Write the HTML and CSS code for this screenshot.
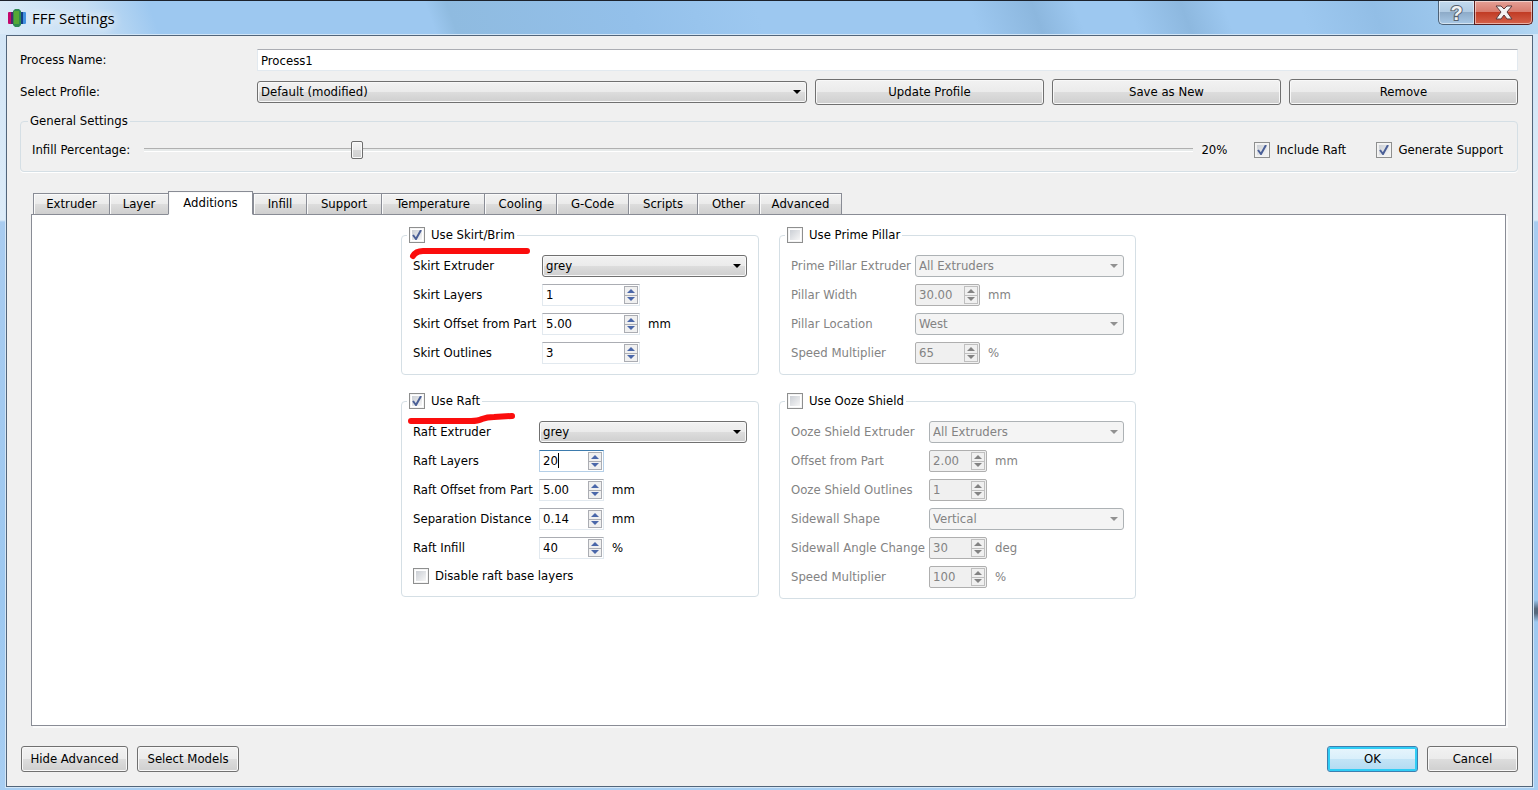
FILE: index.html
```html
<!DOCTYPE html>
<html lang="en">
<head>
  <meta charset="UTF-8">
  <title>FFF Settings</title>
  <link rel="stylesheet" href="styles.css">
</head>
<body>

  <header class="titlebar">
    <svg class="app-icon" width="18" height="20" viewBox="0 0 18 20">
      <rect x="0" y="4" width="5" height="12" rx="1" fill="#c4086c"/>
      <rect x="3" y="4" width="3" height="12" fill="#4b2a6b"/>
      <rect x="13" y="4" width="5" height="12" rx="1" fill="#3f8fe0"/>
      <rect x="12" y="4" width="3" height="12" fill="#123f86"/>
      <path d="M7 1h4l2 2v14l-2 2H7l-2-2V3z" fill="#2f8a52"/>
      <rect x="6" y="3" width="5" height="13" fill="#55a836"/>
    </svg>
    <h1>FFF Settings</h1>
    <div class="window-buttons">
      <button type="button" class="help" aria-label="Help">?</button>
      <button type="button" class="close" aria-label="Close">
        <svg width="18" height="15" viewBox="0 0 18 15">
          <path d="M1 1h5l3 3 3-3h5l-5 6 5 7h-5l-3-4-3 4H1l5-7z" fill="#f4f4f4" stroke="#5b3a3c" stroke-width="1"/>
        </svg>
      </button>
    </div>
  </header>

  <main class="client">
    <div class="form-grid">
      <label for="processName">Process Name:</label>
      <input type="text" class="text-box wide" id="processName" value="Process1">
      <label for="profile">Select Profile:</label>
      <select id="profile"><option>Default (modified)</option></select>
      <button type="button" class="btn">Update Profile</button>
      <button type="button" class="btn">Save as New</button>
      <button type="button" class="btn">Remove</button>
    </div>

    <fieldset class="general">
      <legend>General Settings</legend>
      <div class="general-row">
        <label for="infill" class="infill-label">Infill Percentage:</label>
        <input type="range" id="infill" min="0" max="100" value="20">
        <output for="infill">20%</output>
        <label class="check raft"><input type="checkbox" checked>Include Raft</label>
        <label class="check"><input type="checkbox" checked>Generate Support</label>
      </div>
    </fieldset>

    <nav class="tabs">
      <button type="button">Extruder</button>
      <button type="button">Layer</button>
      <button type="button" class="active">Additions</button>
      <button type="button">Infill</button>
      <button type="button">Support</button>
      <button type="button">Temperature</button>
      <button type="button">Cooling</button>
      <button type="button">G-Code</button>
      <button type="button">Scripts</button>
      <button type="button">Other</button>
      <button type="button">Advanced</button>
    </nav>

    <section class="panel">
      <div class="groups">

        <fieldset class="group skirt">
          <legend><label class="check"><input type="checkbox" checked>Use Skirt/Brim</label></legend>
          <svg class="marker" width="124" height="16" viewBox="0 0 124 16">
            <path d="M6 12q3-5 10-5h104"/>
          </svg>
          <div class="fields">
            <label for="skirtExtruder">Skirt Extruder</label>
            <select id="skirtExtruder"><option>grey</option></select>

            <label for="skirtLayers">Skirt Layers</label>
            <div class="field">
              <div class="spin"><input type="number" id="skirtLayers" value="1"><span class="arrows"><button type="button" class="up" aria-label="Up"></button><button type="button" class="down" aria-label="Down"></button></span></div>
            </div>

            <label for="skirtOffset">Skirt Offset from Part</label>
            <div class="field">
              <div class="spin"><input type="number" id="skirtOffset" step="0.01" value="5.00"><span class="arrows"><button type="button" class="up" aria-label="Up"></button><button type="button" class="down" aria-label="Down"></button></span></div>
              <span>mm</span>
            </div>

            <label for="skirtOutlines">Skirt Outlines</label>
            <div class="field">
              <div class="spin"><input type="number" id="skirtOutlines" value="3"><span class="arrows"><button type="button" class="up" aria-label="Up"></button><button type="button" class="down" aria-label="Down"></button></span></div>
            </div>
          </div>
        </fieldset>

        <fieldset class="group pillar off">
          <legend><label class="check"><input type="checkbox">Use Prime Pillar</label></legend>
          <div class="fields">
            <label for="pillarExtruder">Prime Pillar Extruder</label>
            <select id="pillarExtruder" disabled><option>All Extruders</option></select>

            <label for="pillarWidth">Pillar Width</label>
            <div class="field">
              <div class="spin"><input type="number" id="pillarWidth" step="0.01" value="30.00" disabled><span class="arrows"><button type="button" class="up" aria-label="Up" disabled></button><button type="button" class="down" aria-label="Down" disabled></button></span></div>
              <span>mm</span>
            </div>

            <label for="pillarLocation">Pillar Location</label>
            <select id="pillarLocation" disabled><option>West</option></select>

            <label for="pillarSpeed">Speed Multiplier</label>
            <div class="field">
              <div class="spin"><input type="number" id="pillarSpeed" value="65" disabled><span class="arrows"><button type="button" class="up" aria-label="Up" disabled></button><button type="button" class="down" aria-label="Down" disabled></button></span></div>
              <span>%</span>
            </div>
          </div>
        </fieldset>

        <fieldset class="group raft-group">
          <legend><label class="check"><input type="checkbox" checked>Use Raft</label></legend>
          <svg class="marker" width="124" height="16" viewBox="0 0 124 16">
            <path d="M4 11h60q7 0 11-2 5-2 12-2l18-1"/>
          </svg>
          <div class="fields">
            <label for="raftExtruder">Raft Extruder</label>
            <select id="raftExtruder"><option>grey</option></select>

            <label for="raftLayers">Raft Layers</label>
            <div class="field">
              <div class="spin focused"><input type="number" id="raftLayers" value="20"><i class="caret"></i><span class="arrows"><button type="button" class="up" aria-label="Up"></button><button type="button" class="down" aria-label="Down"></button></span></div>
            </div>

            <label for="raftOffset">Raft Offset from Part</label>
            <div class="field">
              <div class="spin"><input type="number" id="raftOffset" step="0.01" value="5.00"><span class="arrows"><button type="button" class="up" aria-label="Up"></button><button type="button" class="down" aria-label="Down"></button></span></div>
              <span>mm</span>
            </div>

            <label for="separation">Separation Distance</label>
            <div class="field">
              <div class="spin"><input type="number" id="separation" step="0.01" value="0.14"><span class="arrows"><button type="button" class="up" aria-label="Up"></button><button type="button" class="down" aria-label="Down"></button></span></div>
              <span>mm</span>
            </div>

            <label for="raftInfill">Raft Infill</label>
            <div class="field">
              <div class="spin"><input type="number" id="raftInfill" value="40"><span class="arrows"><button type="button" class="up" aria-label="Up"></button><button type="button" class="down" aria-label="Down"></button></span></div>
              <span>%</span>
            </div>

            <label class="check full"><input type="checkbox">Disable raft base layers</label>
          </div>
        </fieldset>

        <fieldset class="group ooze off">
          <legend><label class="check"><input type="checkbox">Use Ooze Shield</label></legend>
          <div class="fields">
            <label for="oozeExtruder">Ooze Shield Extruder</label>
            <select id="oozeExtruder" disabled><option>All Extruders</option></select>

            <label for="oozeOffset">Offset from Part</label>
            <div class="field">
              <div class="spin"><input type="number" id="oozeOffset" step="0.01" value="2.00" disabled><span class="arrows"><button type="button" class="up" aria-label="Up" disabled></button><button type="button" class="down" aria-label="Down" disabled></button></span></div>
              <span>mm</span>
            </div>

            <label for="oozeOutlines">Ooze Shield Outlines</label>
            <div class="field">
              <div class="spin"><input type="number" id="oozeOutlines" value="1" disabled><span class="arrows"><button type="button" class="up" aria-label="Up" disabled></button><button type="button" class="down" aria-label="Down" disabled></button></span></div>
            </div>

            <label for="sidewallShape">Sidewall Shape</label>
            <select id="sidewallShape" disabled><option>Vertical</option></select>

            <label for="sidewallAngle">Sidewall Angle Change</label>
            <div class="field">
              <div class="spin"><input type="number" id="sidewallAngle" value="30" disabled><span class="arrows"><button type="button" class="up" aria-label="Up" disabled></button><button type="button" class="down" aria-label="Down" disabled></button></span></div>
              <span>deg</span>
            </div>

            <label for="oozeSpeed">Speed Multiplier</label>
            <div class="field">
              <div class="spin"><input type="number" id="oozeSpeed" value="100" disabled><span class="arrows"><button type="button" class="up" aria-label="Up" disabled></button><button type="button" class="down" aria-label="Down" disabled></button></span></div>
              <span>%</span>
            </div>
          </div>
        </fieldset>

      </div>
    </section>

    <footer class="footer">
      <button type="button" class="btn hide">Hide Advanced</button>
      <button type="button" class="btn models">Select Models</button>
      <button type="button" class="btn ok">OK</button>
      <button type="button" class="btn cancel">Cancel</button>
    </footer>
  </main>

</body>
</html>
```
FILE: styles.css
```css
* {
  box-sizing: border-box;
}
body {
  margin: 0;
  min-height: 100vh;
  display: flex;
  flex-direction: column;
  padding: 0 5px 3px 6px;
  border-top: 1px solid #1c222c;
  font-family: Tahoma, "DejaVu Sans Condensed", "DejaVu Sans", sans-serif;
  font-size: 13px;
  line-height: 16px;
  color: #000;
  background:
    linear-gradient(#e6f2fc, #e6f2fc) 0 0 / 100% 1px no-repeat,
    linear-gradient(transparent, #56687c 40%, #56687c 60%, transparent) right 0 top 600px / 5px 22px no-repeat,
    linear-gradient(70deg, #dcebf8 0, #c5def4 90px, #9dc8f0 150px, #9dc8f0 410px, #8fbbe0 430px, #93c0ea 600px, #9dc8f0 720px, #9dc8f0 920px, #8cb7de 980px, #9dc8f0 1020px, #9dc8f0 1070px, #8db8df 1120px, #9dc8f0 1160px, #9dc8f0 1230px, #92bee6 1300px, #a2ccf0 1400px, #b9d9f2 1460px) 0 0 / 100% 34px no-repeat,
    linear-gradient(#d2e5f6 0, #dcebf8 220px, #a9ccf0 222px, #9dc8f0 600px, #a8cef2 100%);
}
button, input, select {
  font: inherit;
  color: inherit;
  margin: 0;
}

/* title bar */
.titlebar {
  display: flex;
  align-items: center;
  height: 34px;
}
.app-icon {
  margin: 0 6px 0 2px;
}
h1 {
  margin: 0;
  font: 15px/20px "Open Sans", sans-serif;
  text-shadow: 0 0 8px #fff, 0 0 12px #fff;
}
.window-buttons {
  display: flex;
  align-self: flex-start;
  margin-left: auto;
}
.window-buttons button {
  display: flex;
  align-items: center;
  justify-content: center;
  height: 24px;
  padding: 0;
  border: 1px solid #4d6277;
  border-top: 0;
  box-shadow: inset 0 0 0 1px rgba(255, 255, 255, 0.5);
}
.window-buttons .help {
  width: 36px;
  border-right: 0;
  border-radius: 0 0 0 5px;
  background: linear-gradient(#c3daee 0, #b0cae2 48%, #8eabc8 50%, #a9c9e6 100%);
  font: bold 20px/22px "Liberation Sans", sans-serif;
  color: #f2f2f2;
  -webkit-text-stroke: 2px #566270;
  paint-order: stroke fill;
}
.window-buttons .close {
  width: 59px;
  border-color: #5a1d1d;
  border-radius: 0 0 5px 0;
  background: linear-gradient(#e5a096 0, #d87b6d 48%, #c13c25 50%, #d5614a 100%);
}

/* window body */
.client {
  flex: 1;
  display: flex;
  flex-direction: column;
  padding: 13px 14px 14px 13px;
  border: 1px solid #52657a;
  background: #f0f0f0;
  box-shadow: 0 0 0 1px #d3e6f7;
}
.form-grid {
  display: grid;
  grid-template-columns: 229px 550fr 229fr 229fr 229fr;
  gap: 8px;
  align-items: center;
}
.wide {
  grid-column: 2 / -1;
}
.text-box {
  width: 100%;
  height: 22px;
  padding: 0 3px;
  border: 1px solid #e2e9ef;
  border-top-color: #abadb3;
  background: #fff;
}
select {
  appearance: none;
  width: 100%;
  height: 22px;
  padding: 0 3px;
  border: 1px solid #707070;
  border-radius: 3px;
  box-shadow: inset 0 0 0 1px #f8f8f8;
  background:
    url("data:image/svg+xml,%3Csvg xmlns='http://www.w3.org/2000/svg' width='8' height='4'%3E%3Cpath d='M0 0h8L4 4z'/%3E%3C/svg%3E") right 5px center no-repeat,
    linear-gradient(#f2f2f2 0, #ebebeb 49%, #dddddd 50%, #cfcfcf 100%);
}
select:disabled {
  opacity: 1;
  color: #838383;
  border-color: #adb2b5;
  box-shadow: none;
  background:
    url("data:image/svg+xml,%3Csvg xmlns='http://www.w3.org/2000/svg' width='8' height='4'%3E%3Cpath fill='%23919191' d='M0 0h8L4 4z'/%3E%3C/svg%3E") right 5px center no-repeat,
    #f4f4f4;
}
.btn {
  height: 26px;
  padding: 0;
  border: 1px solid #707070;
  border-radius: 3px;
  background: linear-gradient(#f2f2f2 0, #ebebeb 49%, #dddddd 50%, #cfcfcf 100%);
  box-shadow: inset 0 0 0 1px #f8f8f8;
}

/* check boxes */
.check {
  display: flex;
  align-items: center;
  gap: 6px;
  white-space: nowrap;
}
.check input {
  appearance: none;
  width: 16px;
  height: 16px;
  border: 1px solid #8e8f8f;
  background: linear-gradient(135deg, #cbcfd5, #f6f6f6) content-box;
  padding: 2px;
  box-shadow: inset 0 0 0 1px #f4f4f4;
}
.check input:checked {
  background:
    url("data:image/svg+xml,%3Csvg xmlns='http://www.w3.org/2000/svg' width='10' height='10'%3E%3Cpath fill='none' stroke='%234a5f97' stroke-width='2' d='M1 5l3 4L9 0'/%3E%3C/svg%3E") center no-repeat,
    linear-gradient(135deg, #cbcfd5, #f6f6f6) content-box;
}

fieldset {
  min-width: 0;
  margin: 0;
  border: 1px solid #d5dfe5;
  border-radius: 4px;
}
legend {
  padding: 0 2px;
}

/* general settings */
.general {
  margin-top: 8px;
  padding: 10px 14px 10px 11px;
  box-shadow: 0 1px 0 #fff;
}
.general legend {
  margin-left: -4px;
}
.general-row {
  display: flex;
  align-items: center;
  height: 22px;
}
.infill-label {
  width: 112px;
}
.general-row output {
  width: 61px;
  padding-left: 8px;
}
.general-row .raft {
  width: 122px;
}
input[type="range"] {
  appearance: none;
  flex: 1;
  height: 18px;
  background: linear-gradient(#b0b0b0 0 1px, #e7eaea 1px 3px, #fff 3px) center / 100% 4px no-repeat;
}
input[type="range"]::-webkit-slider-thumb {
  appearance: none;
  width: 12px;
  height: 18px;
  border: 1px solid #6d6d6d;
  border-radius: 2px;
  background: linear-gradient(#f4f4f4 0, #eaeaea 50%, #d8d8d8 51%, #cfcfcf 100%);
  box-shadow: inset 0 0 0 1px #fafafa;
}

/* tabs */
.tabs {
  display: grid;
  grid-template-columns: 76px 59px 85px 53px 75px 103px 72px 72px 69px 62px 83px;
  align-items: end;
  height: 24px;
  margin: 19px 13px 0 13px;
}
.tabs button {
  height: 22px;
  padding: 0;
  border: 1px solid #898c95;
  border-right-width: 0;
  background: linear-gradient(#f2f2f2 0, #ebebeb 49%, #dddddd 50%, #cfcfcf 100%);
  box-shadow: inset 1px 1px 0 #fafafa;
}
.tabs button:last-child {
  border-right-width: 1px;
}
.tabs .active {
  height: 24px;
  border-right-width: 1px;
  border-bottom-color: #fff;
  background: #fff;
  z-index: 1;
}
.panel {
  flex: 1;
  margin: -1px 12px 0 11px;
  padding: 12px 0;
  border: 1px solid #898c95;
  background: #fff;
  box-shadow: 2px 2px 0 #fafafa;
}
.groups {
  display: grid;
  grid-template-columns: 358px 357px;
  gap: 18px 20px;
  align-items: start;
  justify-content: center;
}

/* option groups */
.group {
  position: relative;
  padding: 12px 11px 10px;
}
.group legend {
  margin-left: -6px;
}
.fields {
  display: grid;
  grid-template-columns: 129px 1fr;
  gap: 7px 0;
  align-items: center;
  white-space: nowrap;
}
.raft-group .fields {
  grid-template-columns: 126px 1fr;
}
.pillar .fields {
  grid-template-columns: 124px 1fr;
}
.ooze .fields {
  grid-template-columns: 138px 1fr;
}
.off .fields {
  color: #838383;
}
.full {
  grid-column: 1 / -1;
  height: 20px;
}
.field {
  display: flex;
  align-items: center;
  gap: 8px;
}
.spin {
  position: relative;
  display: flex;
  width: 65px;
  height: 22px;
  padding: 1px;
  border: 1px solid #e2e9ef;
  border-top-color: #abadb3;
  background: #fff;
}
.skirt .spin {
  width: 98px;
}
.ooze .spin {
  width: 58px;
}
.spin input {
  appearance: textfield;
  flex: 1;
  min-width: 0;
  padding: 0 0 0 2px;
  border: 0;
  outline: 0;
  background: none;
}
.spin input::-webkit-inner-spin-button {
  display: none;
}
.focused {
  border-color: #b5cfe7;
  border-top-color: #3d7bad;
}
.caret {
  position: absolute;
  left: 18px;
  top: 2px;
  width: 1px;
  height: 15px;
  background: #000;
}
.arrows {
  display: flex;
  flex-direction: column;
  width: 14px;
}
.arrows button {
  flex: 1;
  padding: 0;
  border: 1px solid #abadb3;
  background: #f0f0f0 center no-repeat;
}
.arrows .down {
  border-top: 0;
}
.arrows .up {
  background-image: url("data:image/svg+xml,%3Csvg xmlns='http://www.w3.org/2000/svg' width='8' height='4'%3E%3Cpath fill='%234a67a9' d='M0 4h8L4 0z'/%3E%3C/svg%3E");
}
.arrows .down {
  background-image: url("data:image/svg+xml,%3Csvg xmlns='http://www.w3.org/2000/svg' width='8' height='4'%3E%3Cpath fill='%234a67a9' d='M0 0h8L4 4z'/%3E%3C/svg%3E");
}
.off .spin {
  border-color: #afafaf;
  border-radius: 2px;
  background: #f0f0f0;
}
.off .arrows button {
  border-color: #bfbfbf;
}
.off .arrows .up {
  background-image: url("data:image/svg+xml,%3Csvg xmlns='http://www.w3.org/2000/svg' width='8' height='4'%3E%3Cpath fill='%23838383' d='M0 4h8L4 0z'/%3E%3C/svg%3E");
}
.off .arrows .down {
  background-image: url("data:image/svg+xml,%3Csvg xmlns='http://www.w3.org/2000/svg' width='8' height='4'%3E%3Cpath fill='%23838383' d='M0 0h8L4 4z'/%3E%3C/svg%3E");
}

/* red pen underline */
.marker {
  position: absolute;
  left: 5px;
  top: 1px;
  pointer-events: none;
}
.marker path {
  fill: none;
  stroke: #fb0d0d;
  stroke-width: 6;
  stroke-linecap: round;
}

/* bottom buttons */
.footer {
  display: flex;
  gap: 9px;
  margin-top: 20px;
  padding-left: 1px;
}
.hide {
  width: 107px;
}
.models {
  width: 102px;
}
.ok {
  width: 91px;
  margin-left: auto;
  border-color: #3c7fb1;
  background: linear-gradient(#e8f5fc 0, #d9effb 49%, #c3e4f6 50%, #b0daf2 100%);
  box-shadow: inset 0 0 0 2px #30cdf5;
}
.cancel {
  width: 91px;
}
```
